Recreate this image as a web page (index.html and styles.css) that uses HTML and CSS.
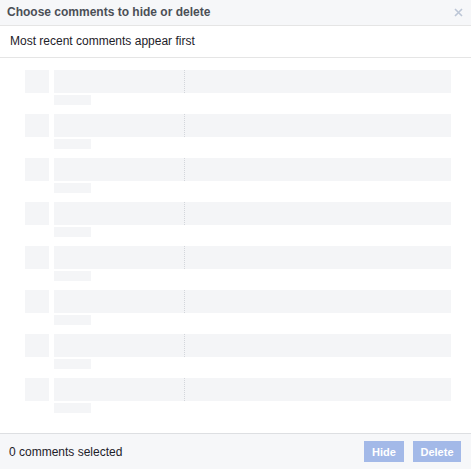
FILE: index.html
```html
<!DOCTYPE html>
<html lang="en">

<head>
    <meta charset="UTF-8">
    <meta name="viewport" content="width=device-width, initial-scale=1.0">
    <link rel="stylesheet" href="styles.css">
    <title>Choose comments</title>
</head>

<body>
    <div class="dialog">
        <div class="header">
            <span class="title">Choose comments to hide or delete</span>
            <svg class="close" width="9" height="9" viewBox="0 0 9 9">
                <path d="M1 1 L8 8 M8 1 L1 8" stroke="#bcc6d6" stroke-width="1.6" />
            </svg>
        </div>
        <div class="sub">Most recent comments appear first</div>

        <div class="list">
            <div class="row"><div class="avatar"></div><div class="body"><div class="bar"><span class="split"></span></div><div class="meta"></div></div></div>
            <div class="row"><div class="avatar"></div><div class="body"><div class="bar"><span class="split"></span></div><div class="meta"></div></div></div>
            <div class="row"><div class="avatar"></div><div class="body"><div class="bar"><span class="split"></span></div><div class="meta"></div></div></div>
            <div class="row"><div class="avatar"></div><div class="body"><div class="bar"><span class="split"></span></div><div class="meta"></div></div></div>
            <div class="row"><div class="avatar"></div><div class="body"><div class="bar"><span class="split"></span></div><div class="meta"></div></div></div>
            <div class="row"><div class="avatar"></div><div class="body"><div class="bar"><span class="split"></span></div><div class="meta"></div></div></div>
            <div class="row"><div class="avatar"></div><div class="body"><div class="bar"><span class="split"></span></div><div class="meta"></div></div></div>
            <div class="row"><div class="avatar"></div><div class="body"><div class="bar"><span class="split"></span></div><div class="meta"></div></div></div>
        </div>

        <div class="footer">
            <span class="count">0 comments selected</span>
            <div class="actions">
                <button class="btn hide">Hide</button>
                <button class="btn delete">Delete</button>
            </div>
        </div>
    </div>
</body>

</html>
```

FILE: styles.css
```css
* {
    margin: 0;
    padding: 0;
    box-sizing: border-box;
}

body {
    background: #fff;
    font-family: "Liberation Sans", Arial, sans-serif;
    font-size: 12px;
}

.dialog {
    width: 471px;
    height: 469px;
    display: flex;
    flex-direction: column;
}

.header {
    height: 26px;
    background: #f6f7f9;
    border-bottom: 1px solid #e5e5e5;
    display: flex;
    align-items: center;
    justify-content: space-between;
    padding: 0 8px 2px 7px;
}

.title {
    font-weight: bold;
    color: #4b4f56;
}

.close {
    margin-top: 1px;
}

.sub {
    height: 32px;
    border-bottom: 1px solid #e5e5e5;
    color: #1d2129;
    display: flex;
    align-items: center;
    padding: 0 10px 1px;
}

.list {
    flex: 1;
    padding: 12px 20px 0 25px;
    display: flex;
    flex-direction: column;
    gap: 9px;
}

.row {
    display: flex;
    gap: 5px;
}

.avatar {
    width: 24px;
    height: 23px;
    background: #f4f5f7;
}

.body {
    flex: 1;
    display: flex;
    flex-direction: column;
    gap: 2px;
}

.bar {
    height: 23px;
    background: #f4f5f7;
    display: flex;
}

.split {
    margin-left: 130px;
    border-left: 1px dotted #d3d6db;
}

.meta {
    width: 37px;
    height: 10px;
    background: #f4f5f7;
}

.footer {
    height: 36px;
    background: #f6f7f9;
    border-top: 1px solid #dddfe2;
    display: flex;
    align-items: center;
    justify-content: space-between;
    padding: 0 10px 0 9px;
}

.count {
    color: #1d2129;
}

.actions {
    display: flex;
    gap: 9px;
}

.btn {
    height: 21px;
    border: 1px solid #a3b9e8;
    background: #a3b9e8;
    color: #fff;
    font-family: "Liberation Sans", Arial, sans-serif;
    font-size: 11px;
    font-weight: bold;
}

.hide {
    width: 40px;
}

.delete {
    width: 48px;
}
```
